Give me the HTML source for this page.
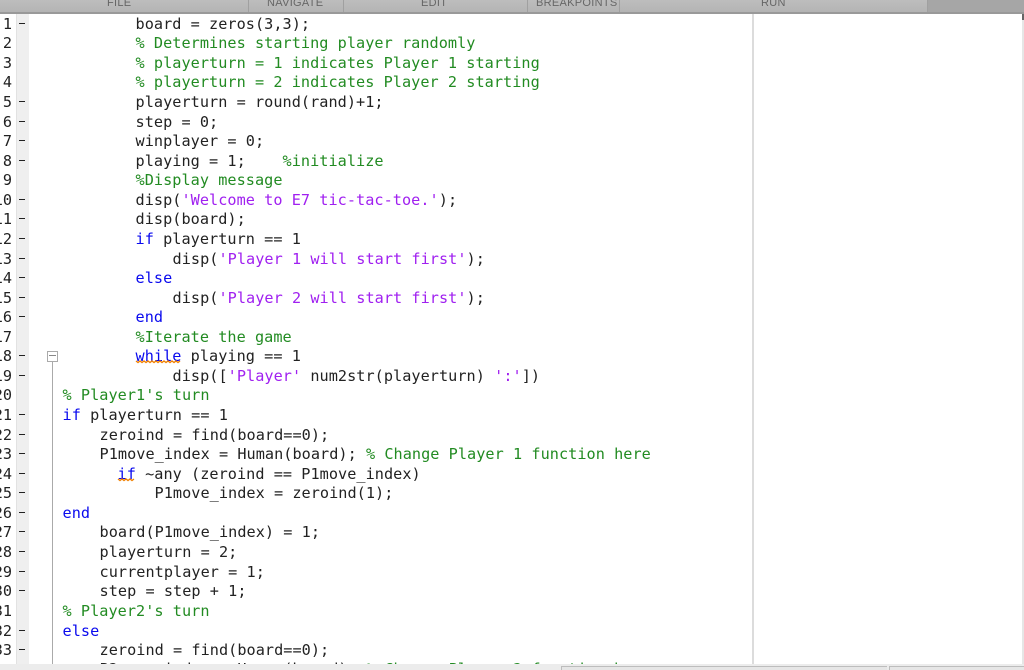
<!DOCTYPE html>
<html>
<head>
<meta charset="utf-8">
<style>
html,body{margin:0;padding:0;background:#fff;}
#p{position:relative;width:1024px;height:670px;overflow:hidden;background:#fff;font-family:"DejaVu Sans Mono","Liberation Mono",monospace;font-size:15.2px;color:#222;}
.a{position:absolute;}
.l{position:absolute;white-space:pre;line-height:20px;height:20px;letter-spacing:.045px;margin-left:-.5px;}
.n{position:absolute;left:-10px;width:22px;text-align:right;line-height:20px;height:20px;color:#222;font-size:15.2px;}
.d{position:absolute;left:19px;width:6px;height:1px;background:#222;}
.c{color:#228b22;}
.k{color:#0a0aee;}
.s{color:#a020f0;}
.t{position:absolute;top:-4px;font-family:"Liberation Sans",sans-serif;font-size:11px;line-height:14px;color:#666;letter-spacing:.3px;}
</style>
</head>
<body>
<div id="p">
<div class="a" style="left:0;top:0;width:1024px;height:12px;background:linear-gradient(#bdbdbd,#b4b4b4);"></div>
<div class="a" style="left:928px;top:0;width:96px;height:12px;background:#a6a6a6;"></div>
<div class="a" style="left:0;top:12px;width:1024px;height:2px;background:#999;"></div>
<div class="a" style="left:248px;top:0;width:1px;height:12px;background:#a0a0a0;"></div>
<div class="a" style="left:343px;top:0;width:1px;height:12px;background:#a0a0a0;"></div>
<div class="a" style="left:527px;top:0;width:1px;height:12px;background:#a0a0a0;"></div>
<div class="a" style="left:619px;top:0;width:1px;height:12px;background:#a0a0a0;"></div>
<div class="a" style="left:927px;top:0;width:1px;height:12px;background:#a0a0a0;"></div>
<div class="t" style="left:107px;">FILE</div>
<div class="t" style="left:267px;">NAVIGATE</div>
<div class="t" style="left:421px;">EDIT</div>
<div class="t" style="left:536px;">BREAKPOINTS</div>
<div class="t" style="left:761px;">RUN</div>

<div class="a" style="left:16px;top:14px;width:13px;height:650px;background:#efefef;border-left:1px solid #e2e2e2;box-sizing:border-box;"></div>
<div class="a" style="left:752px;top:14px;width:2px;height:650px;background:#dcdcdc;"></div>
<div class="a" style="left:1022px;top:14px;width:2px;height:6px;background:#666;"></div>
<div class="a" style="left:1022px;top:20px;width:2px;height:644px;background:#e6e6e6;"></div>
<div class="a" style="left:52px;top:361px;width:1px;height:303px;background:#aaa;"></div>
<div class="a" style="left:47px;top:351px;width:9px;height:9px;border:1px solid #aaa;background:#fff;"></div>
<div class="a" style="left:49px;top:355px;width:7px;height:1px;background:#888;"></div>

<div class="n" style="top:14px;">1</div><div class="d" style="top:23px;"></div>
<div class="n" style="top:33px;">2</div>
<div class="n" style="top:53px;">3</div>
<div class="n" style="top:72px;">4</div>
<div class="n" style="top:92px;">5</div><div class="d" style="top:101px;"></div>
<div class="n" style="top:112px;">6</div><div class="d" style="top:121px;"></div>
<div class="n" style="top:131px;">7</div><div class="d" style="top:140px;"></div>
<div class="n" style="top:151px;">8</div><div class="d" style="top:160px;"></div>
<div class="n" style="top:170px;">9</div>
<div class="n" style="top:190px;">10</div><div class="d" style="top:199px;"></div>
<div class="n" style="top:209px;">11</div><div class="d" style="top:218px;"></div>
<div class="n" style="top:229px;">12</div><div class="d" style="top:238px;"></div>
<div class="n" style="top:249px;">13</div><div class="d" style="top:258px;"></div>
<div class="n" style="top:268px;">14</div><div class="d" style="top:277px;"></div>
<div class="n" style="top:288px;">15</div><div class="d" style="top:297px;"></div>
<div class="n" style="top:307px;">16</div><div class="d" style="top:316px;"></div>
<div class="n" style="top:327px;">17</div>
<div class="n" style="top:346px;">18</div><div class="d" style="top:355px;"></div>
<div class="n" style="top:366px;">19</div><div class="d" style="top:375px;"></div>
<div class="n" style="top:385px;">20</div>
<div class="n" style="top:405px;">21</div><div class="d" style="top:414px;"></div>
<div class="n" style="top:425px;">22</div><div class="d" style="top:434px;"></div>
<div class="n" style="top:444px;">23</div><div class="d" style="top:453px;"></div>
<div class="n" style="top:464px;">24</div><div class="d" style="top:473px;"></div>
<div class="n" style="top:483px;">25</div><div class="d" style="top:492px;"></div>
<div class="n" style="top:503px;">26</div><div class="d" style="top:512px;"></div>
<div class="n" style="top:522px;">27</div><div class="d" style="top:531px;"></div>
<div class="n" style="top:542px;">28</div><div class="d" style="top:551px;"></div>
<div class="n" style="top:562px;">29</div><div class="d" style="top:571px;"></div>
<div class="n" style="top:581px;">30</div><div class="d" style="top:590px;"></div>
<div class="n" style="top:601px;">31</div>
<div class="n" style="top:621px;">32</div><div class="d" style="top:630px;"></div>
<div class="n" style="top:640px;">33</div><div class="d" style="top:649px;"></div>

<div class="l" style="left:136px;top:14px;">board = zeros(3,3);</div>
<div class="l c" style="left:136px;top:33px;">% Determines starting player randomly</div>
<div class="l c" style="left:136px;top:53px;">% playerturn = 1 indicates Player 1 starting</div>
<div class="l c" style="left:136px;top:72px;">% playerturn = 2 indicates Player 2 starting</div>
<div class="l" style="left:136px;top:92px;">playerturn = round(rand)+1;</div>
<div class="l" style="left:136px;top:112px;">step = 0;</div>
<div class="l" style="left:136px;top:131px;">winplayer = 0;</div>
<div class="l" style="left:136px;top:151px;">playing = 1;    <span class="c">%initialize</span></div>
<div class="l c" style="left:136px;top:170px;">%Display message</div>
<div class="l" style="left:136px;top:190px;">disp(<span class="s">'Welcome to E7 tic-tac-toe.'</span>);</div>
<div class="l" style="left:136px;top:209px;">disp(board);</div>
<div class="l" style="left:136px;top:229px;"><span class="k">if</span> playerturn == 1</div>
<div class="l" style="left:173px;top:249px;">disp(<span class="s">'Player 1 will start first'</span>);</div>
<div class="l k" style="left:136px;top:268px;">else</div>
<div class="l" style="left:173px;top:288px;">disp(<span class="s">'Player 2 will start first'</span>);</div>
<div class="l k" style="left:136px;top:307px;">end</div>
<div class="l c" style="left:136px;top:327px;">%Iterate the game</div>
<div class="l" style="left:136px;top:346px;"><span class="k">while</span> playing == 1</div>
<div class="l" style="left:173px;top:366px;">disp([<span class="s">'Player'</span> num2str(playerturn) <span class="s">':'</span>])</div>
<div class="l c" style="left:63px;top:385px;">% Player1's turn</div>
<div class="l" style="left:63px;top:405px;"><span class="k">if</span> playerturn == 1</div>
<div class="l" style="left:100px;top:425px;">zeroind = find(board==0);</div>
<div class="l" style="left:100px;top:444px;">P1move_index = Human(board); <span class="c">% Change Player 1 function here</span></div>
<div class="l" style="left:118px;top:464px;"><span class="k">if</span> ~any (zeroind == P1move_index)</div>
<div class="l" style="left:155px;top:483px;">P1move_index = zeroind(1);</div>
<div class="l k" style="left:63px;top:503px;">end</div>
<div class="l" style="left:100px;top:522px;">board(P1move_index) = 1;</div>
<div class="l" style="left:100px;top:542px;">playerturn = 2;</div>
<div class="l" style="left:100px;top:562px;">currentplayer = 1;</div>
<div class="l" style="left:100px;top:581px;">step = step + 1;</div>
<div class="l c" style="left:63px;top:601px;">% Player2's turn</div>
<div class="l k" style="left:63px;top:621px;">else</div>
<div class="l" style="left:100px;top:640px;">zeroind = find(board==0);</div>
<div class="l" style="left:100px;top:659px;">P2move_index = Human(board); <span class="c">% Change Player 2 function here</span></div>

<svg class="a" style="left:0;top:0;" width="1024" height="670" fill="none" stroke="#f08000" stroke-width="1.4">
<path d="M136 361l2 1.5 2-1.5 2 1.5 2-1.5 2 1.5 2-1.5 2 1.5 2-1.5 2 1.5 2-1.5 2 1.5 2-1.5 2 1.5 2-1.5 2 1.5 2-1.5 2 1.5 2-1.5 2 1.5 2-1.5 2 1.5 2-1.5"/>
<path d="M118 479l2 1.5 2-1.5 2 1.5 2-1.5 2 1.5 2-1.5 2 1.5 2-1.5"/>
</svg>

<div class="a" style="left:0;top:664px;width:1024px;height:6px;background:#ececec;"></div>
<div class="a" style="left:561px;top:666px;width:326px;height:4px;background:#e6e6e6;border-top:1px solid #bdbdbd;border-left:1px solid #bdbdbd;box-sizing:border-box;"></div>
<div class="a" style="left:889px;top:666px;width:135px;height:4px;background:#e6e6e6;border-top:1px solid #bdbdbd;border-left:1px solid #bdbdbd;box-sizing:border-box;"></div>
</div>
</body>
</html>
